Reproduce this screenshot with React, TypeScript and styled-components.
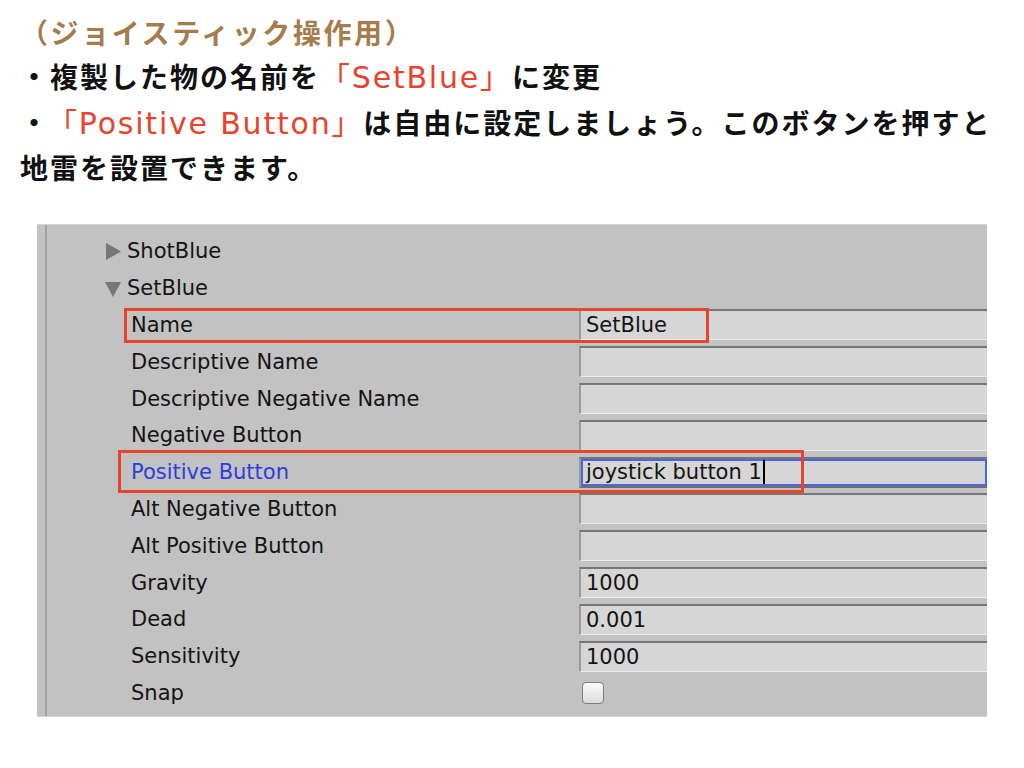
import React from "react";
import styled, { createGlobalStyle } from "styled-components";

const GlobalStyle = createGlobalStyle`
  html, body {
    margin: 0;
    padding: 0;
    background: #ffffff;
  }
`;

type Field = {
  label: string;
  value?: string;
  kind?: "text" | "check";
  active?: boolean;
  mark?: "name" | "positive";
};

const fields: Field[] = [
  { label: "Name", value: "SetBlue", mark: "name" },
  { label: "Descriptive Name", value: "" },
  { label: "Descriptive Negative Name", value: "" },
  { label: "Negative Button", value: "" },
  { label: "Positive Button", value: "joystick button 1", active: true, mark: "positive" },
  { label: "Alt Negative Button", value: "" },
  { label: "Alt Positive Button", value: "" },
  { label: "Gravity", value: "1000" },
  { label: "Dead", value: "0.001" },
  { label: "Sensitivity", value: "1000" },
  { label: "Snap", kind: "check" },
];

const Page = styled.div`
  padding: 15px 0 0 20px;
  font-family: "Liberation Sans", "Noto Sans CJK JP", sans-serif;
  font-weight: 700;
  font-size: 28px;
  letter-spacing: 2px;
  color: #111;
`;

const Heading = styled.div`
  height: 40px;
  line-height: 40px;
  color: #a67c4c;
  letter-spacing: 2.6px;
  white-space: nowrap;
`;

const Line = styled.div`
  height: 46px;
  line-height: 46px;
  white-space: nowrap;
`;

const Red = styled.span<{ $lead?: number }>`
  margin-left: ${(p) => p.$lead ?? 0}px;
  color: #e8432b;
  font-family: "DejaVu Sans", "Noto Sans CJK JP", sans-serif;
  font-weight: 400;
  font-size: 30px;
  letter-spacing: 1.8px;
`;

const Panel = styled.div`
  margin: 31px 0 0 37px;
  width: 950px;
  padding-left: 8px;
  box-sizing: border-box;
  background: #c2c2c2;
  border-top: 1px solid #d2d2d2;
  border-bottom: 1px solid #d6d6d6;
  overflow: hidden;
  font-family: "DejaVu Sans", sans-serif;
  font-weight: 400;
  font-size: 21px;
  color: #141414;
`;

const Inner = styled.div`
  border-left: 2px solid #a2a2a2;
  padding: 8px 0 5px;
`;

const Foldout = styled.div`
  height: 36.8px;
  display: flex;
  align-items: center;
  gap: 5px;
  padding-left: 58px;
`;

const Row = styled.div`
  position: relative;
  height: 36.8px;
  display: grid;
  grid-template-columns: 532px 1fr;
  align-items: center;
`;

const Label = styled.div<{ $active?: boolean }>`
  padding-left: 84px;
  color: ${(p) => (p.$active ? "#2b3ee0" : "#141414")};
  white-space: nowrap;
`;

const Input = styled.div<{ $active?: boolean }>`
  height: 31px;
  box-sizing: border-box;
  background: #d6d6d6;
  border-top: 2px solid #767676;
  border-left: 2px solid #9a9a9a;
  border-bottom: 1px solid #ececec;
  padding-left: 5px;
  display: flex;
  align-items: center;
  white-space: nowrap;
  ${(p) =>
    p.$active &&
    `
    box-shadow: inset 0 0 0 2px #4a66e6;
    border-bottom: 2px solid #6d6d6d;
  `}
`;

const Caret = styled.span`
  display: inline-block;
  width: 2px;
  height: 24px;
  margin-left: 1px;
  background: #000;
`;

const Check = styled.div`
  width: 22px;
  height: 22px;
  margin-left: 3px;
  box-sizing: border-box;
  border: 1px solid #7c7c7c;
  border-radius: 4px;
  background: linear-gradient(#fbfbfb, #dcdcdc);
`;

const Mark = styled.div<{ $left: number; $top: number; $w: number; $h: number }>`
  position: absolute;
  left: ${(p) => p.$left}px;
  top: ${(p) => p.$top}px;
  width: ${(p) => p.$w}px;
  height: ${(p) => p.$h}px;
  box-sizing: border-box;
  border: 3px solid #e8432b;
  pointer-events: none;
`;

const Arrow = ({ open }: { open?: boolean }) => (
  <svg width="17" height="17" viewBox="0 0 17 17">
    {open ? (
      <polygon points="0,2 16,2 8,17" fill="#767676" />
    ) : (
      <polygon points="1,0 16,8.5 1,17" fill="#767676" />
    )}
  </svg>
);

export default function App() {
  return (
    <>
      <GlobalStyle />
      <Page lang="ja">
        <Heading>（ジョイスティック操作用）</Heading>
        <Line>
          ・複製した物の名前を<Red>「SetBlue」</Red>に変更
        </Line>
        <Line>
          ・<Red $lead={12}>「Positive Button」</Red>は自由に設定しましょう。このボタンを押すと
        </Line>
        <Line>地雷を設置できます。</Line>
      </Page>

      <Panel>
        <Inner>
          <Foldout>
            <Arrow />
            ShotBlue
          </Foldout>
          <Foldout>
            <Arrow open />
            SetBlue
          </Foldout>
          {fields.map((f) => (
            <Row key={f.label}>
              <Label $active={f.active}>{f.label}</Label>
              {f.kind === "check" ? (
                <Check />
              ) : (
                <Input $active={f.active}>
                  {f.value}
                  {f.active && <Caret />}
                </Input>
              )}
              {f.mark === "name" && <Mark $left={77} $top={1} $w={585} $h={35} />}
              {f.mark === "positive" && <Mark $left={71} $top={-4} $w={686} $h={43} />}
            </Row>
          ))}
        </Inner>
      </Panel>
    </>
  );
}
